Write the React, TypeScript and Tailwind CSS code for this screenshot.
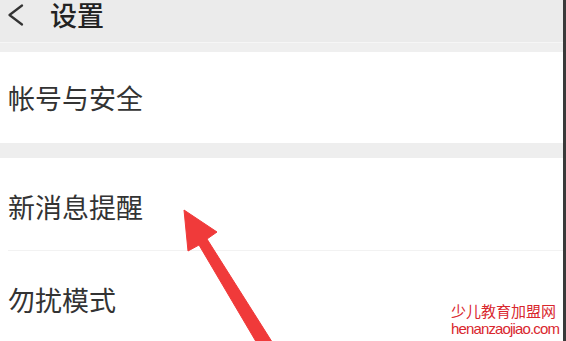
export default function App() {
  const cjk = { fontFamily: '"Noto Sans CJK SC", "Noto Sans", sans-serif' };

  return (
    <div className="relative flex h-[341px] w-[566px] overflow-hidden bg-white" style={cjk}>
      <div className="flex min-h-0 flex-1 flex-col">
        {/* top bar */}
        <header className="flex h-[42px] shrink-0 items-start bg-[#ebebeb] pt-px">
          <div className="flex h-[27px] items-center gap-[26px] pl-[7px]">
            <svg width="17" height="22" viewBox="0 0 17 22" fill="none" className="text-[#333]">
              <path d="M15 1.5 L2.5 11 L15 20.5" stroke="currentColor" strokeWidth="2.2" strokeLinecap="round" strokeLinejoin="round" />
            </svg>
            <span className="text-[27px] font-medium leading-[27px] text-[#222]">设置</span>
          </div>
        </header>
        <div className="h-px shrink-0 bg-[#f6f6f6]" />
        <div className="h-[9px] shrink-0 bg-[#efefef]" />

        <section className="flex h-[91px] shrink-0 items-center pl-[8px]">
          <span className="text-[27px] leading-none text-[#333]">帐号与安全</span>
        </section>

        <div className="h-[15px] shrink-0 bg-[#eeeeee]" />

        <section className="flex shrink-0 flex-col">
          <div className="flex h-[92px] items-center pl-[8px] pt-[4px]">
            <span className="text-[27px] leading-none text-[#333]">新消息提醒</span>
          </div>
          <div className="ml-[8px] h-px bg-[#f2f2f2]" />
          <div className="flex h-[96px] items-center pl-[8px]">
            <span className="text-[27px] leading-none text-[#333]">勿扰模式</span>
          </div>
        </section>
      </div>
      <div className="w-[3px] shrink-0 bg-[#3a3a3a]" />

      {/* red arrow */}
      <svg className="pointer-events-none absolute left-0 top-0" width="566" height="341" viewBox="0 0 566 341">
        <polygon
          points="184,210 217,232 207,239 274,345 258,345 199,245 188,251"
          fill="#f03a3a"
          stroke="#f03a3a"
          strokeWidth="1"
          strokeLinejoin="round"
        />
      </svg>

      {/* watermark */}
      <div className="absolute left-[450px] top-[301px] flex flex-col gap-px bg-white/60 px-px text-[#d9272e]">
        <span className="text-[15px] leading-[19px]">少儿教育加盟网</span>
        <span
          className="text-[15px] leading-[15px] tracking-[-0.85px]"
          style={{ fontFamily: '"Liberation Sans", Arial, sans-serif' }}
        >
          henanzaojiao.com
        </span>
      </div>
    </div>
  );
}
